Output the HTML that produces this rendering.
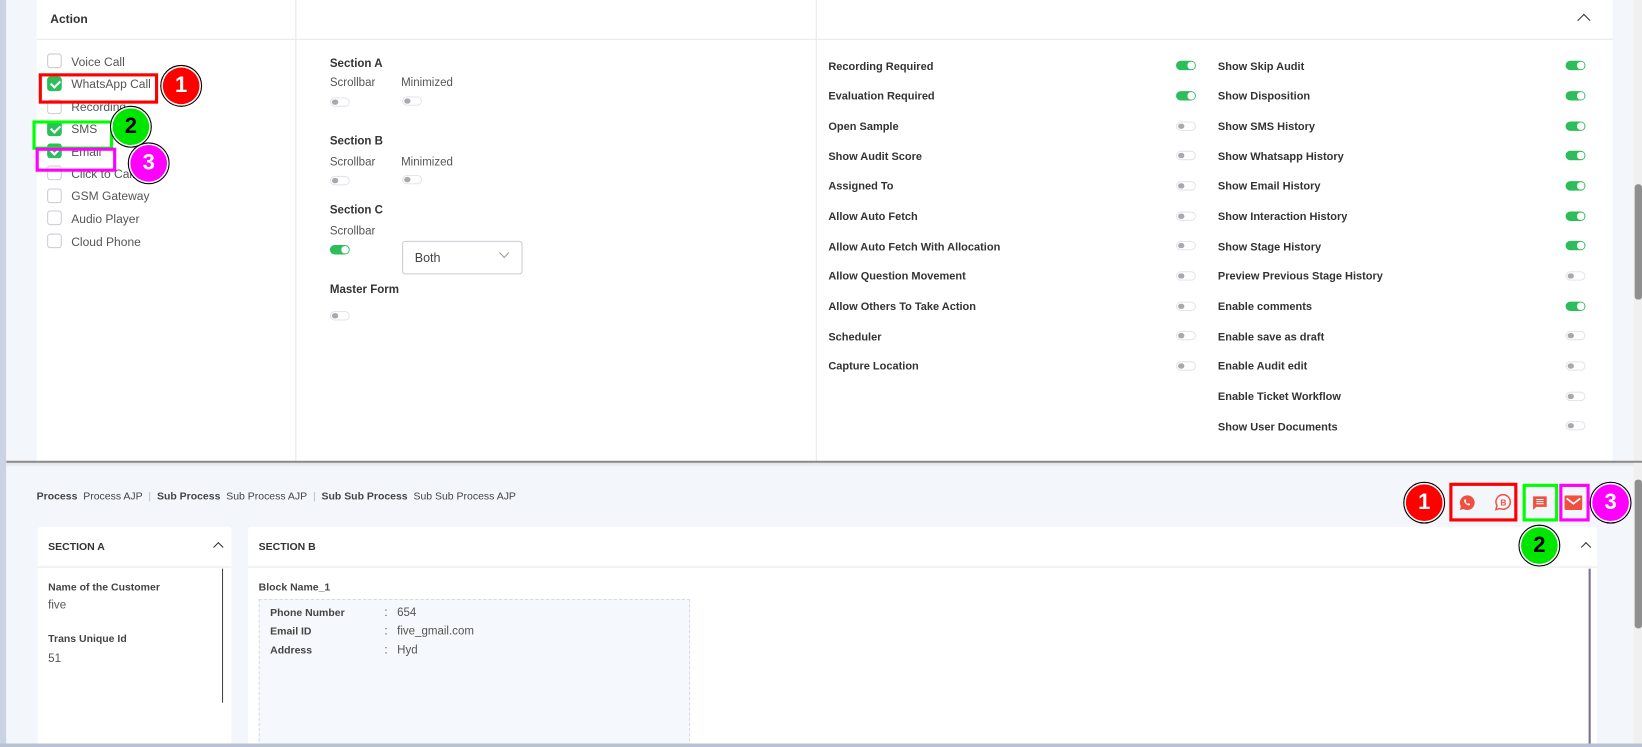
<!DOCTYPE html>
<html><head><meta charset="utf-8"><style>
*{box-sizing:border-box;margin:0;padding:0}
html,body{width:1642px;height:747px;overflow:hidden;background:#fff}
body{font-family:"Liberation Sans",sans-serif;position:relative;color:#333}
#w{position:absolute;left:0;top:0;width:1568px;height:714px;transform:scale(1.0472);transform-origin:0 0}
.a{position:absolute}
.t{font-size:11px;color:#555;white-space:nowrap}
.b{font-size:10.5px;font-weight:bold;color:#333;white-space:nowrap}
.cb{position:absolute;left:45px;width:14px;height:14px;border:1px solid #c9ccd3;border-radius:3px;background:#fff;margin-top:-2px}
.cb.on{background:#2dbd5a;border-color:#2dbd5a}
.cb.on:after{content:"";position:absolute;left:4px;top:1px;width:4px;height:7px;border:solid #fff;border-width:0 2px 2px 0;transform:rotate(45deg)}
.cl{position:absolute;left:68px;font-size:11.5px;color:#555}
.tg{position:absolute;width:19px;height:9px;border-radius:5px;border:1px solid #e3e5ea;background:#fff}
.tg:after{content:"";position:absolute;left:1px;top:1px;width:6px;height:5px;border-radius:3px;background:#a8a8ad}
.tg.on{background:#2dbd5a;border-color:#2dbd5a}
.tg.on:after{left:10px;top:0;width:7px;height:7px;background:#fff}
.bd{position:absolute;width:40px;height:40px;border-radius:50%;border:1.5px solid #000;box-shadow:inset 0 0 0 1.5px #fff;font-weight:bold;font-size:21px;text-align:center;line-height:37px}
.box{position:absolute;border:3px solid}
.up{position:absolute;width:9px;height:9px;border-left:1.5px solid #333;border-top:1.5px solid #333;transform:rotate(45deg)}
</style></head><body><div id="w">
<div class="a" style="left:0;top:0;width:6px;height:714px;background:#c9d3e4"></div>
<div class="a" style="left:6px;top:0;width:1554px;height:714px;background:#f3f6fb"></div>
<div class="a" style="left:1560px;top:0;width:8px;height:440px;background:#f0f0f0"></div>
<div class="a" style="left:1561px;top:176px;width:7px;height:110px;background:#8f8f8f;border-radius:3px"></div>
<div class="a" style="left:35px;top:0;width:1505px;height:440px;background:#fff"></div>
<div class="a" style="left:35px;top:37px;width:1505px;height:1px;background:#e6e8ec"></div>
<div class="a" style="left:282px;top:0;width:1px;height:440px;background:#e6e8ec"></div>
<div class="a" style="left:779px;top:0;width:1px;height:440px;background:#e6e8ec"></div>
<div class="a b" style="left:48px;top:13px;font-size:11.5px">Action</div>
<div class="up" style="left:1508px;top:15px"></div>

<div class="cb" style="top:53px"></div><div class="cl" style="top:54px">Voice Call</div>
<div class="cb on" style="top:75px"></div><div class="cl" style="top:75px">WhatsApp Call</div>
<div class="cb" style="top:97px"></div><div class="cl" style="top:97px">Recording</div>
<div class="cb on" style="top:118px"></div><div class="cl" style="top:118px">SMS</div>
<div class="cb on" style="top:139px"></div><div class="cl" style="top:140px">Email</div>
<div class="cb" style="top:160px"></div><div class="cl" style="top:161px">Click to Call</div>
<div class="cb" style="top:182px"></div><div class="cl" style="top:182px">GSM Gateway</div>
<div class="cb" style="top:203px"></div><div class="cl" style="top:204px">Audio Player</div>
<div class="cb" style="top:225px"></div><div class="cl" style="top:226px">Cloud Phone</div>

<div class="box" style="left:37px;top:70px;width:114px;height:29px;border-color:#f00"></div>
<div class="box" style="left:31px;top:115px;width:77px;height:28px;border-color:#0f0"></div>
<div class="box" style="left:34px;top:141px;width:77px;height:23px;border-color:#f0f"></div>
<div class="bd" style="left:153px;top:62px;background:#f00;color:#fff">1</div>
<div class="bd" style="left:105px;top:101px;background:#00e600;color:#000">2</div>
<div class="bd" style="left:122px;top:136px;background:#f0f;color:#fff">3</div>

<div class="a b" style="left:315px;top:55px;font-size:11px">Section A</div>
<div class="a t" style="left:315px;top:73px">Scrollbar</div><div class="a t" style="left:383px;top:73px">Minimized</div>
<div class="tg" style="left:315px;top:93px"></div><div class="tg" style="left:384px;top:92px"></div>
<div class="a b" style="left:315px;top:129px;font-size:11px">Section B</div>
<div class="a t" style="left:315px;top:149px">Scrollbar</div><div class="a t" style="left:383px;top:149px">Minimized</div>
<div class="tg" style="left:315px;top:168px"></div><div class="tg" style="left:384px;top:167px"></div>
<div class="a b" style="left:315px;top:195px;font-size:11px">Section C</div>
<div class="a t" style="left:315px;top:215px">Scrollbar</div>
<div class="tg on" style="left:315px;top:234px"></div>
<div class="a" style="left:384px;top:230px;width:115px;height:32px;border:1px solid #c8ccd4;border-radius:3px"><span class="a" style="left:11px;top:8px;font-size:12px;color:#444">Both</span><span class="a" style="left:93px;top:7px;width:7px;height:7px;border-right:1px solid #999;border-bottom:1px solid #999;transform:rotate(45deg)"></span></div>
<div class="a b" style="left:315px;top:271px;font-size:11px">Master Form</div>
<div class="tg" style="left:315px;top:297px"></div>

<div class="a b" style="left:791px;top:58px">Recording Required</div><div class="tg on" style="left:1123px;top:58px"></div>
<div class="a b" style="left:791px;top:86px">Evaluation Required</div><div class="tg on" style="left:1123px;top:87px"></div>
<div class="a b" style="left:791px;top:115px">Open Sample</div><div class="tg" style="left:1123px;top:116px"></div>
<div class="a b" style="left:791px;top:144px">Show Audit Score</div><div class="tg" style="left:1123px;top:144px"></div>
<div class="a b" style="left:791px;top:172px">Assigned To</div><div class="tg" style="left:1123px;top:173px"></div>
<div class="a b" style="left:791px;top:201px">Allow Auto Fetch</div><div class="tg" style="left:1123px;top:202px"></div>
<div class="a b" style="left:791px;top:230px">Allow Auto Fetch With Allocation</div><div class="tg" style="left:1123px;top:230px"></div>
<div class="a b" style="left:791px;top:258px">Allow Question Movement</div><div class="tg" style="left:1123px;top:259px"></div>
<div class="a b" style="left:791px;top:287px">Allow Others To Take Action</div><div class="tg" style="left:1123px;top:288px"></div>
<div class="a b" style="left:791px;top:316px">Scheduler</div><div class="tg" style="left:1123px;top:316px"></div>
<div class="a b" style="left:791px;top:344px">Capture Location</div><div class="tg" style="left:1123px;top:345px"></div>

<div class="a b" style="left:1163px;top:58px">Show Skip Audit</div><div class="tg on" style="left:1495px;top:58px"></div>
<div class="a b" style="left:1163px;top:86px">Show Disposition</div><div class="tg on" style="left:1495px;top:87px"></div>
<div class="a b" style="left:1163px;top:115px">Show SMS History</div><div class="tg on" style="left:1495px;top:116px"></div>
<div class="a b" style="left:1163px;top:144px">Show Whatsapp History</div><div class="tg on" style="left:1495px;top:144px"></div>
<div class="a b" style="left:1163px;top:172px">Show Email History</div><div class="tg on" style="left:1495px;top:173px"></div>
<div class="a b" style="left:1163px;top:201px">Show Interaction History</div><div class="tg on" style="left:1495px;top:202px"></div>
<div class="a b" style="left:1163px;top:230px">Show Stage History</div><div class="tg on" style="left:1495px;top:230px"></div>
<div class="a b" style="left:1163px;top:258px">Preview Previous Stage History</div><div class="tg" style="left:1495px;top:259px"></div>
<div class="a b" style="left:1163px;top:287px">Enable comments</div><div class="tg on" style="left:1495px;top:288px"></div>
<div class="a b" style="left:1163px;top:316px">Enable save as draft</div><div class="tg" style="left:1495px;top:316px"></div>
<div class="a b" style="left:1163px;top:344px">Enable Audit edit</div><div class="tg" style="left:1495px;top:345px"></div>
<div class="a b" style="left:1163px;top:373px">Enable Ticket Workflow</div><div class="tg" style="left:1495px;top:374px"></div>
<div class="a b" style="left:1163px;top:402px">Show User Documents</div><div class="tg" style="left:1495px;top:402px"></div>

<div class="a" style="left:6px;top:440px;width:1562px;height:2px;background:#8a8a8a"></div>
<div class="a" style="left:6px;top:442px;width:1554px;height:4px;background:linear-gradient(#e0e2e6,#f3f6fb)"></div>
<div class="a" style="left:1560px;top:442px;width:8px;height:272px;background:#f0f0f0"></div>
<div class="a" style="left:1561px;top:458px;width:7px;height:142px;background:#8f8f8f;border-radius:3px"></div>

<div class="a" style="left:35px;top:469px;font-size:10px;color:#444;font-weight:bold;white-space:nowrap">Process <span style="font-weight:normal">&nbsp;Process AJP</span> <span style="color:#bbb;font-weight:normal">&nbsp;|&nbsp;</span> Sub Process <span style="font-weight:normal">&nbsp;Sub Process AJP</span> <span style="color:#bbb;font-weight:normal">&nbsp;|&nbsp;</span> Sub Sub Process <span style="font-weight:normal">&nbsp;Sub Sub Process AJP</span></div>

<svg class="a" style="left:1393px;top:472px" width="16" height="16" viewBox="0 0 16 16"><path d="M8 1a7 7 0 0 0-6 10.5L1 15l3.6-1A7 7 0 1 0 8 1z" fill="#ef5040"/><path d="M5.5 5c.5-.5 1-.3 1.3.4l.3.8c.1.3-.3.6-.5.9.4.9 1.2 1.6 2 2 .3-.2.6-.6.9-.5l.9.4c.5.3.6.7.2 1.2-.8.8-2.5.3-4-1.2S4.8 5.7 5.5 5z" fill="#fff"/></svg>
<svg class="a" style="left:1427px;top:471px" width="17" height="17" viewBox="0 0 17 17"><path d="M8.5 1.3a7 7 0 0 0-6 10.5L1.5 15.6l3.7-1A7 7 0 1 0 8.5 1.3z" fill="none" stroke="#ef5040" stroke-width="1.4"/><text x="8.6" y="11.6" font-size="8" font-weight="bold" fill="#ef5040" text-anchor="middle" font-family="Liberation Sans">B</text></svg>
<svg class="a" style="left:1463px;top:473px" width="15" height="15" viewBox="0 0 15 15"><path d="M1 1h13v10H4l-3 3z" fill="#ef5040"/><path d="M4 4h7M4 6h7M4 8h7" stroke="#fff" stroke-width="1"/></svg>
<svg class="a" style="left:1494px;top:473px" width="17" height="14" viewBox="0 0 17 14"><rect x="0" y="0" width="17" height="14" rx="1.5" fill="#ef5040"/><path d="M2 3l6.5 5L15 3" stroke="#fff" stroke-width="1.6" fill="none"/></svg>
<div class="box" style="left:1384px;top:461px;width:65px;height:37px;border-color:#f00"></div>
<div class="box" style="left:1454px;top:462px;width:34px;height:36px;border-color:#0f0"></div>
<div class="box" style="left:1489px;top:462px;width:29px;height:36px;border-color:#f0f"></div>
<div class="bd" style="left:1340px;top:460px;background:#f00;color:#fff">1</div>
<div class="bd" style="left:1518px;top:460px;background:#f0f;color:#fff">3</div>

<div class="a" style="left:36px;top:503px;width:185px;height:210px;background:#fff;border-radius:3px"></div>
<div class="a" style="left:36px;top:541px;width:185px;height:1px;background:#e6e8ec"></div>
<div class="a b" style="left:46px;top:517px;font-size:10px">SECTION A</div>
<div class="up" style="left:205px;top:519px;width:7px;height:7px;border-width:1px"></div>
<div class="a" style="left:212px;top:543px;width:1px;height:128px;background:#444"></div>
<div class="a b" style="left:46px;top:556px;font-size:10px;color:#444">Name of the Customer</div>
<div class="a t" style="left:46px;top:572px">five</div>
<div class="a b" style="left:46px;top:605px;font-size:10px;color:#444">Trans Unique Id</div>
<div class="a t" style="left:46px;top:623px">51</div>

<div class="a" style="left:237px;top:503px;width:1288px;height:210px;background:#fff;border-radius:3px"></div>
<div class="a" style="left:237px;top:541px;width:1288px;height:1px;background:#e6e8ec"></div>
<div class="a b" style="left:247px;top:517px;font-size:10px">SECTION B</div>
<div class="up" style="left:1511px;top:519px;width:7px;height:7px;border-width:1px"></div>
<div class="a" style="left:1517px;top:543px;width:2px;height:170px;background:#7a7090"></div>
<div class="a b" style="left:247px;top:556px;font-size:10px;color:#444">Block Name_1</div>
<div class="a" style="left:247px;top:572px;width:412px;height:141px;border:1px dashed #d4dbe6;background:#f5f8fc"></div>
<div class="a b" style="left:258px;top:580px;font-size:10px;color:#444">Phone Number</div><div class="a t" style="left:367px;top:579px">:&nbsp;&nbsp; 654</div>
<div class="a b" style="left:258px;top:598px;font-size:10px;color:#444">Email ID</div><div class="a t" style="left:367px;top:597px">:&nbsp;&nbsp; five_gmail.com</div>
<div class="a b" style="left:258px;top:616px;font-size:10px;color:#444">Address</div><div class="a t" style="left:367px;top:615px">:&nbsp;&nbsp; Hyd</div>
<div class="bd" style="left:1450px;top:501px;background:#00e600;color:#000">2</div>

<div class="a" style="left:0;top:710px;width:1568px;height:4px;background:#b7c2d3"></div>
</div></body></html>
